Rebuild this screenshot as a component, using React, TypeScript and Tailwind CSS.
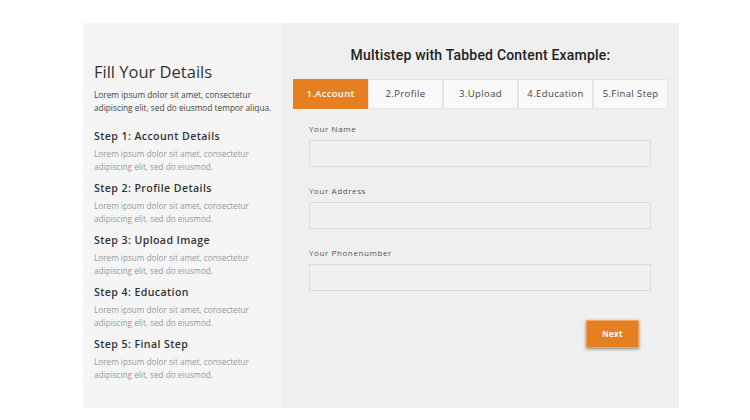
import React from "react";

const steps = [
  "Step 1: Account Details",
  "Step 2: Profile Details",
  "Step 3: Upload Image",
  "Step 4: Education",
  "Step 5: Final Step",
];

const tabs = ["1.Account", "2.Profile", "3.Upload", "4.Education", "5.Final Step"];

const fields = ["Your Name", "Your Address", "Your Phonenumber"];

export default function App() {
  return (
    <div
      className="w-[750px] h-[420px] bg-white pt-[23px] pl-[83px]"
      style={{ fontFamily: '"Open Sans", "Noto Sans", sans-serif' }}
    >
      <div className="flex w-[596px] h-[385px]">
        <div className="w-[199px] bg-[#f5f5f5] pl-[11px] pr-[8px] pt-[38px]">
          <h1 className="text-[16.5px] leading-[22px] text-[#333] font-normal">Fill Your Details</h1>
          <p className="mt-[6px] w-[178px] text-[8.3px] leading-[12.5px] text-[#444]">
            Lorem ipsum dolor sit amet, consectetur adipiscing elit, sed do eiusmod tempor aliqua.
          </p>
          <div className="mt-[14px] flex flex-col gap-[7px]">
            {steps.map((s) => (
              <div key={s}>
                <div className="text-[10.6px] leading-[16px] font-semibold tracking-[0.4px] text-[#333]">{s}</div>
                <div className="mt-[4px] text-[8.2px] leading-[12.5px] text-[#999] w-[172px]">
                  Lorem ipsum dolor sit amet, consectetur adipiscing elit, sed do eiusmod.
                </div>
              </div>
            ))}
          </div>
        </div>
        <div className="flex-1 bg-[#efefef] pt-[23px] pl-[11px] pr-[11px]">
          <h2
            className="text-center text-[14px] leading-[18px] font-medium text-[#222] tracking-[0.2px]"
            style={{ fontFamily: "Roboto, sans-serif" }}
          >
            Multistep with Tabbed Content Example:
          </h2>
          <div className="mt-[15px] flex h-[30px] w-[375px]">
            {tabs.map((t, i) => (
              <div
                key={t}
                className={
                  i === 0
                    ? "w-[75px] flex items-center justify-center bg-[#e67e22] text-white text-[9.5px] font-semibold tracking-[0.3px] pt-[1px]"
                    : "w-[75px] flex items-center justify-center bg-[#f9f9f9] border border-[#e6e6e6] text-[#444] text-[9.5px] tracking-[0.4px] pt-[1px]"
                }
              >
                {t}
              </div>
            ))}
          </div>
          <div className="pl-[16px] pr-[17px] mt-[14px] flex flex-col gap-[18px]">
            {fields.map((f) => (
              <div key={f}>
                <div className="text-[8px] leading-[12px] tracking-[0.6px] text-[#555]">{f}</div>
                <div className="mt-[5px] h-[27px] border border-[#dcdcdc] bg-[#f0f0f0]" />
              </div>
            ))}
          </div>
          <div className="flex justify-end pr-[29px] mt-[29px]">
            <button className="w-[53px] h-[28px] bg-[#e67e22] text-white text-[8px] font-bold tracking-[0.3px] border border-[#f0a560] shadow-[0_1px_3px_rgba(0,0,0,0.45)]">
              Next
            </button>
          </div>
        </div>
      </div>
    </div>
  );
}
